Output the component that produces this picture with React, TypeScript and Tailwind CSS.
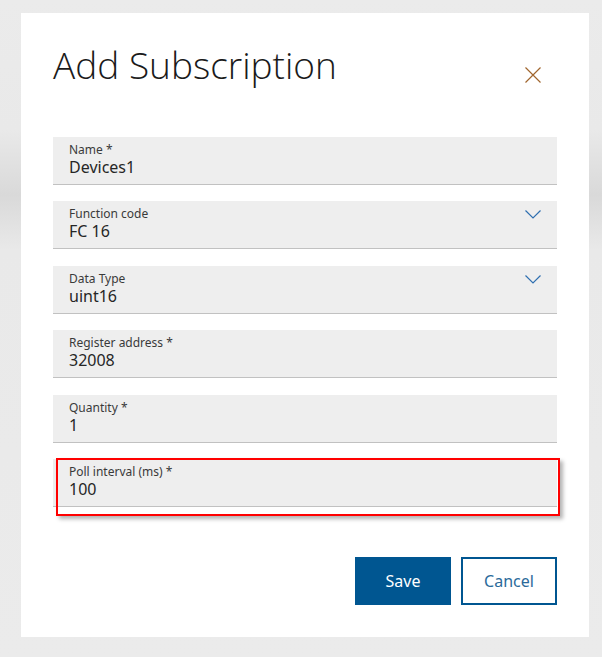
import React from "react";

interface FieldProps {
    label: string;
    value: string;
    select?: boolean;
    highlight?: boolean;
}

const fields: FieldProps[] = [
    { label: "Name *", value: "Devices1" },
    { label: "Function code", value: "FC 16", select: true },
    { label: "Data Type", value: "uint16", select: true },
    { label: "Register address *", value: "32008" },
    { label: "Quantity *", value: "1" },
    { label: "Poll interval (ms) *", value: "100", highlight: true },
];

function Chevron() {
    return (
        <svg width="16" height="9" viewBox="0 0 16 9" className="shrink-0">
            <path d="M0.5 0.5 L8 8 L15.5 0.5" fill="none" stroke="#2f6fb0" strokeWidth="1.2" />
        </svg>
    );
}

function Field({ label, value, select, highlight }: FieldProps) {
    return (
        <div className="relative">
            <div className="h-12 bg-[#eeeeee] border-b border-[#c1c1c1] flex items-start justify-between pl-4 pr-4">
                <div className="flex flex-col pt-[5px]">
                    <span className="text-[12px] leading-4 text-[#3a3a3a]">{label}</span>
                    <span className="text-[16px] leading-[18px] text-[#262626]">{value}</span>
                </div>
                {select && (
                    <div className="pt-[9px]">
                        <Chevron />
                    </div>
                )}
            </div>
            {highlight && (
                // annotation box drawn over the field
                <div className="absolute left-[3px] top-[-1px] w-[504px] h-[58px] border-2 border-[#ff0000] shadow-[3px_3px_4px_rgba(0,0,0,0.3)] pointer-events-none" />
            )}
        </div>
    );
}

export default function App() {
    return (
        <div
            className="w-full h-[657px] overflow-hidden bg-[linear-gradient(to_bottom,#ebebeb_0px,#e9e9e9_130px,#d9d9d9_195px,#e9e9e9_250px,#ebebeb_100%)]"
            style={{ fontFamily: '"Noto Sans", "Open Sans", sans-serif' }}
        >
            <div className="ml-[21px] mt-[13px] w-[568px] h-[624px] bg-white px-8 pt-[30px] flex flex-col">
                <header className="flex items-start justify-between">
                    <h1
                        className="text-[37px] leading-[44px] font-light text-[#1a1a1a]"
                        style={{ fontFamily: '"Open Sans", sans-serif' }}
                    >
                        Add Subscription
                    </h1>
                    <button className="mt-[24px] mr-4 w-4 h-4 flex items-center justify-center">
                        <svg width="16" height="16" viewBox="0 0 16 16">
                            <path d="M0.5 0.5 L15.5 15.5 M15.5 0.5 L0.5 15.5" stroke="#a0652e" strokeWidth="1.2" fill="none" />
                        </svg>
                    </button>
                </header>

                <div className="mt-[50px] flex flex-col gap-[16.4px]">
                    {fields.map((f) => (
                        <Field key={f.label} {...f} />
                    ))}
                </div>

                <div className="mt-[50px] flex justify-end gap-[10px]">
                    <button className="w-24 h-12 bg-[#005691] text-white text-[16px]">Save</button>
                    <button className="w-24 h-12 border-2 border-[#005691] text-[#2b6a9a] text-[16px] bg-white">
                        Cancel
                    </button>
                </div>
            </div>
        </div>
    );
}
